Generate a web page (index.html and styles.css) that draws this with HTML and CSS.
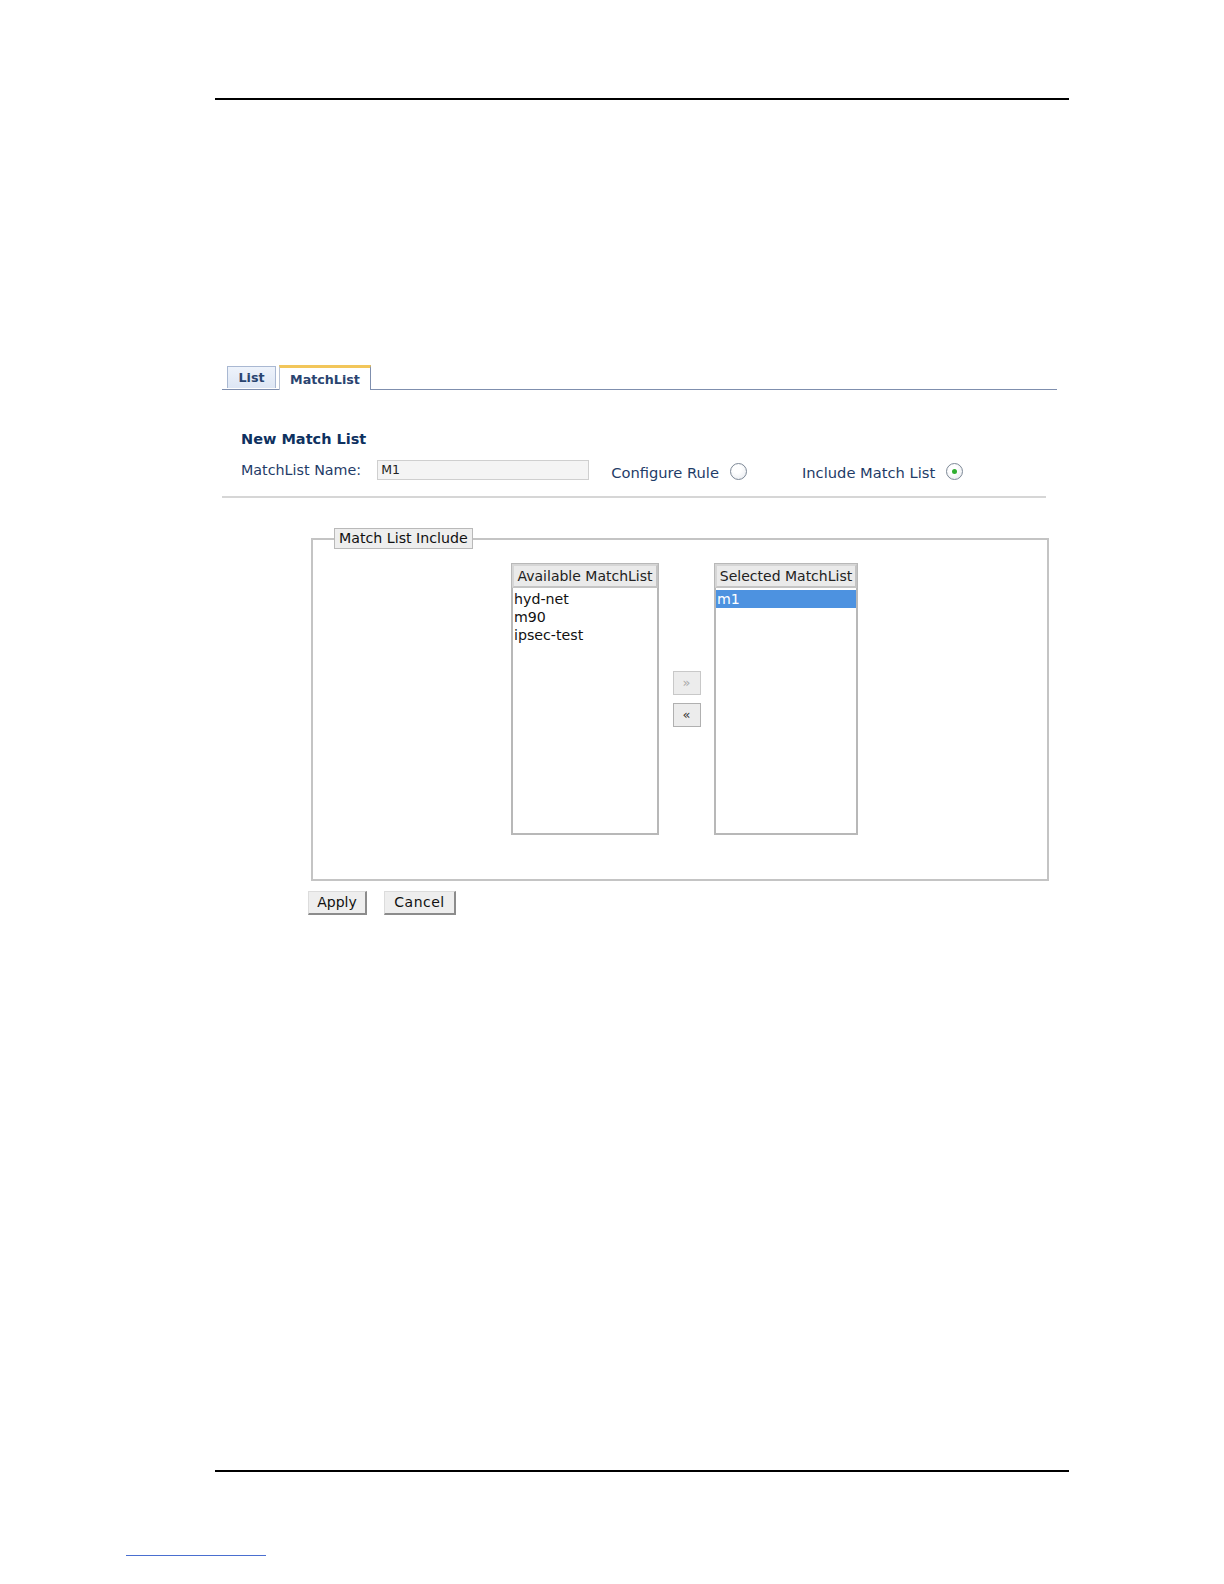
FILE: index.html
```html
<!DOCTYPE html>
<html>
<head>
<meta charset="utf-8">
<title>New Match List</title>
<link rel="stylesheet" href="styles.css">
</head>
<body>
<div class="page">
  <div class="rule rule-top"></div>

  <div class="content">
    <div class="tabs">
      <div class="tab tab-list">List</div>
      <div class="tab tab-active">MatchList</div>
    </div>

    <div class="section">
      <div class="title">New Match List</div>
      <div class="form-row">
        <span class="label">MatchList Name:</span>
        <span class="input">M1</span>
        <span class="label opt">Configure Rule</span>
        <span class="radio"></span>
        <span class="label opt opt2">Include Match List</span>
        <span class="radio checked"></span>
      </div>
    </div>
    <div class="sep"></div>

    <fieldset class="box">
      <legend class="legend">Match List Include</legend>
      <div class="lists">
        <div class="listbox avail">
          <div class="list-head">Available MatchList</div>
          <div class="item">hyd-net</div>
          <div class="item">m90</div>
          <div class="item">ipsec-test</div>
        </div>
        <div class="movers">
          <span class="mv disabled">&raquo;</span>
          <span class="mv">&laquo;</span>
        </div>
        <div class="listbox sel">
          <div class="list-head">Selected MatchList</div>
          <div class="item selected">m1</div>
        </div>
      </div>
    </fieldset>

    <div class="actions">
      <span class="btn btn-apply">Apply</span>
      <span class="btn btn-cancel">Cancel</span>
    </div>
  </div>

  <div class="rule rule-bottom"></div>
  <div class="link-line"></div>
</div>
</body>
</html>
```
FILE: styles.css
```css
html, body {
  margin: 0;
  padding: 0;
  background: #ffffff;
}
html {
  overflow: hidden;
}
body {
  font-family: "DejaVu Sans", Verdana, sans-serif;
  font-size: 14px;
  color: #1c3a64;
}
.page {
  padding-top: 98px;
}
.rule {
  margin-left: 215px;
  width: 854px;
  height: 2px;
  background: #000;
}
.content {
  margin-left: 222px;
  width: 835px;
}
.tabs {
  margin-top: 265px;
  height: 24px;
  display: flex;
  align-items: flex-end;
  gap: 3px;
  padding-left: 5px;
  border-bottom: 1px solid #7f8fae;
}
.tab {
  font-weight: bold;
  font-size: 12.7px;
  color: #2a4470;
  box-sizing: border-box;
}
.tab-list {
  width: 49px;
  height: 22px;
  line-height: 21px;
  text-align: center;
  background: linear-gradient(#eef3fb, #dde6f4);
  border: 1px solid #a9b8d2;
  border-bottom: none;
  margin-bottom: 1px;
}
.tab-active {
  width: 92px;
  height: 25px;
  line-height: 23px;
  text-align: center;
  background: #fff;
  border-top: 3px solid #f2c65a;
  border-left: 1px solid #b8c2d4;
  border-right: 1px solid #7f8fae;
  margin-bottom: -1px;
}
.section {
  padding-left: 19px;
  padding-top: 41px;
}
.title {
  font-weight: bold;
  font-size: 14.5px;
  color: #0e3160;
  line-height: 17px;
}
.form-row {
  display: flex;
  align-items: center;
  margin-top: 11px;
  height: 22px;
}
.label {
  font-size: 14.3px;
  color: #1f3c68;
}
.input {
  margin-left: 16px;
  width: 212px;
  height: 20px;
  box-sizing: border-box;
  background: #f4f4f4;
  border: 1px solid #cfcfcf;
  font-size: 12.5px;
  color: #222;
  padding-left: 3px;
  line-height: 18px;
}
.opt {
  margin-left: 22px;
  font-size: 14.7px;
  position: relative;
  top: 2px;
}
.opt2 {
  margin-left: 55px;
}
.radio {
  margin-left: 11px;
  width: 17px;
  height: 17px;
  box-sizing: border-box;
  border-radius: 50%;
  border: 1px solid #7d8896;
  background: radial-gradient(circle at 40% 35%, #ffffff 30%, #e4e7ec 100%);
  position: relative;
  top: 1px;
}
.radio.checked::after {
  content: "";
  position: absolute;
  left: 5px;
  top: 5px;
  width: 5px;
  height: 5px;
  border-radius: 50%;
  background: #2fae2f;
}
.sep {
  margin-top: 15px;
  width: 824px;
  height: 2px;
  background: #d6d6d6;
}
.box {
  margin: 30px 0 0 89px;
  width: 738px;
  box-sizing: border-box;
  border: 2px solid #c4c4c4;
  padding: 14px 0 44px 0;
  min-inline-size: 0;
}
.legend {
  margin-left: 21px;
  padding: 0 4px;
  height: 21px;
  line-height: 19px;
  box-sizing: border-box;
  background: #eeeeee;
  border: 1px solid #b9b9b9;
  color: #111;
  font-size: 14.2px;
}
.lists {
  display: flex;
  margin-left: 198px;
}
.listbox {
  height: 272px;
  box-sizing: border-box;
  border: 2px solid #b8b8b8;
  background: #fff;
  color: #111;
}
.avail { width: 148px; }
.sel { width: 144px; }
.list-head {
  height: 24px;
  line-height: 21px;
  box-sizing: border-box;
  background: #eaeaea;
  border: 2px solid #c4c4c4;
  border-top-color: #d6d6d6;
  border-left-color: #d6d6d6;
  text-align: center;
  font-size: 14px;
  color: #222;
  margin: -1px -1px 2px -1px;
  white-space: nowrap;
  overflow: hidden;
}
.item {
  height: 18px;
  line-height: 18px;
  padding-left: 1px;
  font-size: 14.2px;
  color: #111;
}
.item.selected {
  background: #4d92e0;
  color: #fff;
}
.movers {
  width: 55px;
  display: flex;
  flex-direction: column;
  justify-content: center;
  align-items: center;
  gap: 8px;
}
.mv {
  width: 28px;
  height: 24px;
  box-sizing: border-box;
  border: 1px solid #b0b0b0;
  background: #ececec;
  text-align: center;
  line-height: 21px;
  font-size: 13px;
  color: #333;
}
.mv.disabled {
  color: #aaaaaa;
  border-color: #c8c8c8;
}
.actions {
  display: flex;
  gap: 17px;
  margin: 10px 0 0 86px;
}
.btn {
  height: 24px;
  box-sizing: border-box;
  line-height: 21px;
  text-align: center;
  background: #eeeeee;
  border: 1px solid #dcdcdc;
  border-right: 2px solid #8c8c8c;
  border-bottom: 2px solid #8c8c8c;
  font-size: 14px;
  color: #111;
}
.btn-apply { width: 59px; }
.btn-cancel { width: 72px; letter-spacing: 0.5px; }
.rule-bottom {
  margin-top: 555px;
}
.link-line {
  margin: 83px 0 0 126px;
  width: 140px;
  height: 1px;
  background: #4a6fd0;
}
```
